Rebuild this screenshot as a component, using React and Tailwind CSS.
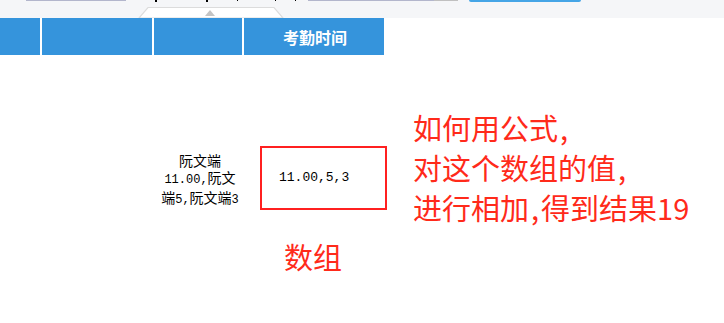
export default function App() {
  const mono = { fontFamily: '"Liberation Mono", monospace' };
  return (
    <div className="w-[724px] h-[323px] bg-white overflow-hidden" style={{ fontFamily: '"Noto Sans CJK SC", sans-serif' }}>
      {/* top toolbar */}
      <div className="h-[18px] bg-[#f5f6f8] relative">
        <div className="absolute left-[26px] top-0 w-[100px] h-px bg-[#b3b6cc]" />
        <div className="absolute left-[155px] top-0 w-[2px] h-[2px] bg-black" />
        <div className="absolute left-[206px] top-0 w-[2px] h-[2px] bg-black" />
        <div className="absolute left-[237px] top-0 w-[1px] h-[1px] bg-black" />
        <div className="absolute left-[275px] top-0 w-[1px] h-[1px] bg-black" />
        <div className="absolute left-[295px] top-0 w-[1px] h-[1px] bg-black" />
        <div className="absolute left-[308px] top-0 w-[126px] h-px bg-[#b3b6cc]" />
        <div className="absolute left-[434px] top-0 w-[24px] h-px bg-[#c0c0c0]" />
        <div className="absolute left-[469px] top-0 w-[112px] h-[2px] bg-[#45a5e6] rounded-b-[2px]" />
        <svg className="absolute left-[138px] top-[6px]" width="146" height="12" viewBox="0 0 146 12">
          <polygon points="10,1.5 136,1.5 145,12 1,12" fill="#ffffff" stroke="#dcdcdc" strokeWidth="1.2" />
          <polygon points="72,4 77,10 67,10" fill="#c4c4c4" />
        </svg>
      </div>
      {/* blue header */}
      <div className="flex h-[37px] gap-[2px]">
        <div className="w-[40px] bg-[#3594dc]" />
        <div className="w-[110px] bg-[#3594dc]" />
        <div className="w-[88px] bg-[#3594dc]" />
        <div className="w-[140px] bg-[#3594dc] flex items-center justify-center pl-[2px] text-white font-bold text-[16px]">考勤时间</div>
      </div>
      {/* content */}
      <div className="flex items-start pl-[150px] pt-[52px]">
        <div className="w-[110px] mt-[39px] h-[64px] flex flex-col items-center justify-center pt-[4px] pr-[10px] text-[14px] leading-[17px] text-black">
          <div>阮文端</div>
          <div><span className="text-[12px]" style={mono}>11.00,</span>阮文</div>
          <div>端<span className="text-[12px]" style={mono}>5,</span>阮文端<span className="text-[12px]" style={mono}>3</span></div>
        </div>
        <div className="flex flex-col mt-[39px]">
          <div className="w-[127px] h-[64px] border-[2px] border-[#ff2020] flex items-center pl-[17px] text-[13px] text-black" style={mono}>
            11.00,5,3
          </div>
          <div className="mt-[26px] ml-[24px] text-[29px] leading-[40px] text-[#ff2a1a]">数组</div>
        </div>
        <div className="ml-[26px] text-[29px] leading-[40px] text-[#ff2a1a]">
          <div>如何用公式<span className="ml-[2px]">,</span></div>
          <div>对这个数组的值<span className="ml-[2px]">,</span></div>
          <div>进行相加<span className="mx-[2px]">,</span>得到结果19</div>
        </div>
      </div>
    </div>
  );
}
